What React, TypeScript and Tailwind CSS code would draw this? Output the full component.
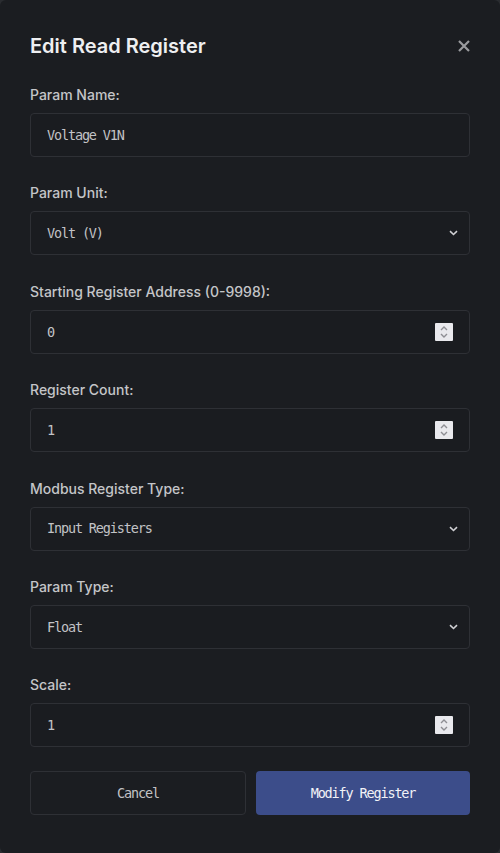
import type { ReactNode } from "react"

const mono = "font-['DejaVu_Sans_Mono','Liberation_Mono',monospace] text-[13.5px] tracking-[-1.15px]"

function Field(props: { label: string; children: ReactNode }) {
  return (
    <div className="flex flex-col">
      <label className="mb-2 text-[14px] leading-[21px] font-medium text-[#c4c5c8]">{props.label}</label>
      {props.children}
    </div>
  )
}

function TextBox(props: { value: string }) {
  return (
    <div className="flex h-[44px] items-center rounded-[4px] border border-[#2e3035] bg-[#1a1c20] px-4">
      <input
        readOnly
        value={props.value}
        className={`w-full bg-transparent text-[#c2c3c6] outline-none ${mono}`}
      />
    </div>
  )
}

function NumberBox(props: { value: string }) {
  return (
    <div className="flex h-[44px] items-center rounded-[4px] border border-[#2e3035] bg-[#1a1c20] pl-4 pr-4">
      <input
        readOnly
        value={props.value}
        className={`min-w-0 flex-1 bg-transparent text-[#c2c3c6] outline-none ${mono}`}
      />
      <div className="flex h-[18px] w-[18px] flex-col items-center justify-center gap-[2px] rounded-[1px] bg-[#e9e9ed]">
        <svg width="8" height="5" viewBox="0 0 8 5" fill="none">
          <path d="M1 4L4 1L7 4" stroke="#8e8e93" strokeWidth="1.4" />
        </svg>
        <svg width="8" height="5" viewBox="0 0 8 5" fill="none">
          <path d="M1 1L4 4L7 1" stroke="#8e8e93" strokeWidth="1.4" />
        </svg>
      </div>
    </div>
  )
}

function SelectBox(props: { value: string }) {
  return (
    <div className="flex h-[44px] items-center rounded-[4px] border border-[#2e3035] bg-[#1a1c20] pl-4 pr-[11px]">
      <span className={`flex-1 text-[#c2c3c6] ${mono}`}>{props.value}</span>
      <svg width="9" height="6" viewBox="0 0 9 6" fill="none">
        <path d="M1 1.2L4.5 4.5L8 1.2" stroke="#d0d1d4" strokeWidth="1.6" />
      </svg>
    </div>
  )
}

export default function App() {
  return (
    <div className="min-h-[853px] w-[500px] bg-[#2a2c30] font-['Inter','Liberation_Sans',sans-serif]">
      <div className="flex min-h-[853px] flex-col rounded-[6px] bg-[#1b1d21] px-[30px] pt-[32px]">
        <div className="mb-[24px] flex items-center justify-between">
          <h2 className="text-[20px] leading-[28px] font-semibold text-[#eeeff1]">Edit Read Register</h2>
          <svg width="12" height="12" viewBox="0 0 12 12" fill="none">
            <path d="M1 1L11 11M11 1L1 11" stroke="#9a9b9e" strokeWidth="2.2" />
          </svg>
        </div>

        <div className="flex flex-col gap-[25.4px]">
          <Field label="Param Name:">
            <TextBox value="Voltage V1N" />
          </Field>
          <Field label="Param Unit:">
            <SelectBox value="Volt (V)" />
          </Field>
          <Field label="Starting Register Address (0-9998):">
            <NumberBox value="0" />
          </Field>
          <Field label="Register Count:">
            <NumberBox value="1" />
          </Field>
          <Field label="Modbus Register Type:">
            <SelectBox value="Input Registers" />
          </Field>
          <Field label="Param Type:">
            <SelectBox value="Float" />
          </Field>
          <Field label="Scale:">
            <NumberBox value="1" />
          </Field>
        </div>

        <div className="mt-[24px] flex gap-[10px]">
          <button
            className={`h-[44px] w-[216px] rounded-[4px] border border-[#2e3035] bg-[#1b1d21] text-[#c2c3c6] ${mono}`}
          >
            Cancel
          </button>
          <button className={`h-[44px] flex-1 rounded-[4px] bg-[#3c4d8a] text-[#f2f3f7] ${mono}`}>
            Modify Register
          </button>
        </div>
      </div>
    </div>
  )
}
